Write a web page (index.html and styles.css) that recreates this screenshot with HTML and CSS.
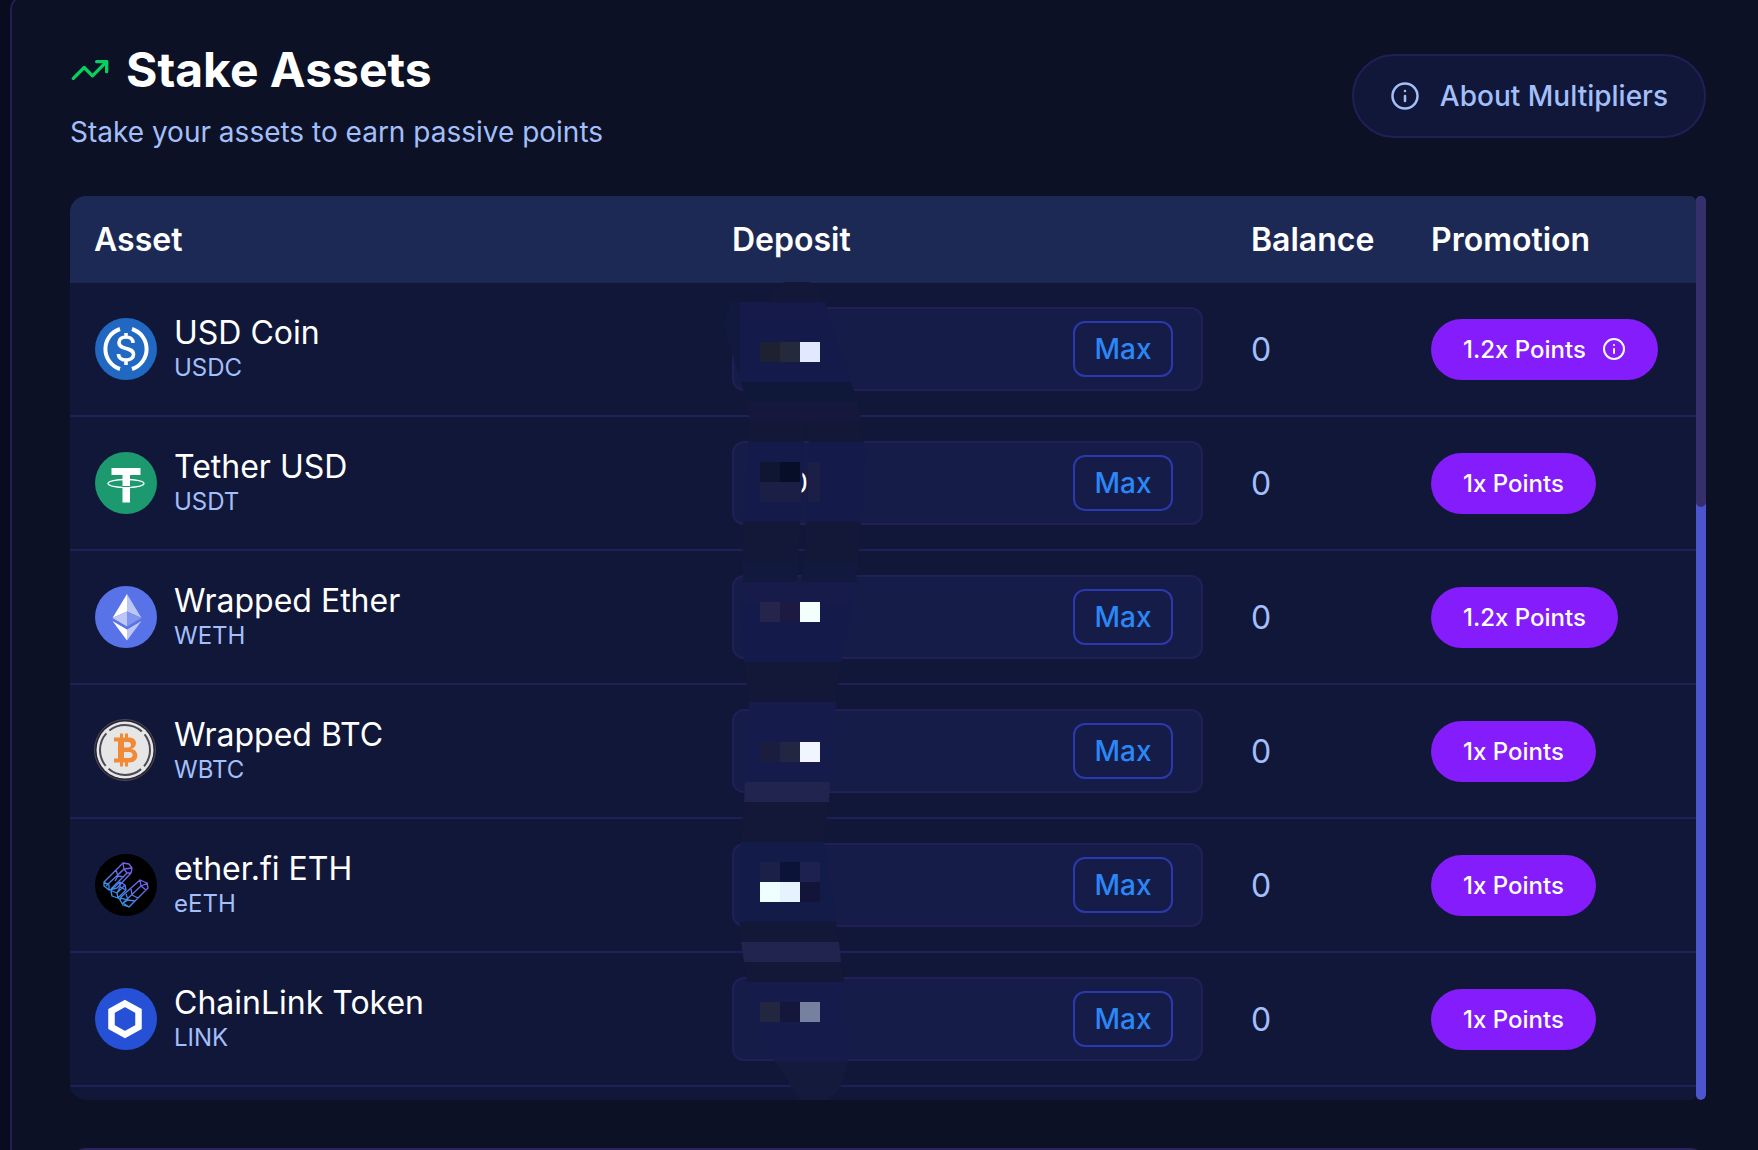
FILE: index.html
```html
<!DOCTYPE html>
<html lang="en">
<head>
    <meta charset="utf-8">
    <title>Stake Assets</title>
    <link rel="stylesheet" href="styles.css">
</head>
<body>
    <!-- shared icons -->
    <svg class="defs" width="0" height="0" aria-hidden="true">
        <symbol id="info" viewBox="0 0 24 24">
            <circle cx="12" cy="12" r="10"/>
            <path d="M12 16v-4M12 8h.01"/>
        </symbol>
    </svg>

    <main class="panel">
        <header class="panel-header">
            <div>
                <h1 class="title">
                    <svg class="trend" viewBox="0 0 24 24"><path d="M22 7l-8.500 8.500-5-5L2 17"/><path d="M16 7h6v6"/></svg>
                    Stake Assets
                </h1>
                <p class="subtitle">Stake your assets to earn passive points</p>
            </div>
            <button type="button" class="about-btn">
                <svg class="icon"><use href="#info"/></svg>
                About Multipliers
            </button>
        </header>

        <div class="table-wrap">
            <div class="table-view">
                <table>
                    <colgroup>
                        <col>
                        <col class="col-deposit">
                        <col class="col-balance">
                        <col class="col-promo">
                    </colgroup>
                    <thead>
                        <tr>
                            <th scope="col">Asset</th>
                            <th scope="col">Deposit</th>
                            <th scope="col">Balance</th>
                            <th scope="col">Promotion</th>
                        </tr>
                    </thead>
                    <tbody>
                        <tr>
                            <td>
                                <div class="asset">
                                    <svg class="coin" viewBox="0 0 64 64">
                                        <circle cx="32" cy="32" r="31" fill="#2168c2"/>
                                        <path d="M26 12a21 21 0 0 0 0 40M38 12a21 21 0 0 1 0 40" fill="none" stroke="#fff" stroke-width="4"/>
                                        <path d="M39 26c0-4-3-6-7-6s-7 2-7 5.500c0 8 14.500 4 14.500 12 0 3.500-3.500 5.500-7.500 5.500s-7.500-2-7.500-6M32 16v5M32 42v6" fill="none" stroke="#fff" stroke-width="3.600"/>
                                    </svg>
                                    <div class="asset-text">
                                        <div class="name">USD Coin</div>
                                        <div class="symbol">USDC</div>
                                    </div>
                                </div>
                            </td>
                            <td class="deposit-cell">
                                <div class="deposit">
                                    <input type="text" aria-label="USDC deposit">
                                    <button type="button" class="max-btn">Max</button>
                                </div>
                                <!-- pixelated cover over the deposit amounts -->
                                <svg class="mosaic" viewBox="708 275 170 830">
                                    <path fill="#131838" d="M768 304l6-14 10-8h26l8 8 5 12z"/>
                                    <path fill="#111a3e" d="M731 302h9v75l-7-20-10-35z"/>
                                    <path fill="#161a4a" d="M740 302h85l6 20h-91z"/>
                                    <path fill="#141b4a" d="M740 322h91l14 40 6 20H741z"/>
                                    <path fill="#101839" d="M741 382h110l7 20H747z"/>
                                    <path fill="#16173c" d="M747 402h111l3 20H750z"/>
                                    <path fill="#131838" d="M750 422h54v20h-56zM807 422h54l2 20h-54z"/>
                                    <path fill="#141b4a" d="M748 442h56l-4 80h-57zM809 442h55l1 20-4 60h-55z"/>
                                    <path fill="#131838" d="M743 522h57l-2 40h-55zM806 522h55l-3 40h-55z"/>
                                    <path fill="#111a3e" d="M743 562h55l-1 20h-54zM803 562h55l-2 20h-55z"/>
                                    <path fill="#161b4a" d="M742 582h113l-2 20H741z"/>
                                    <path fill="#141b4a" d="M741 602h112l-12 60H744z"/>
                                    <path fill="#131838" d="M744 662h97l-5 40h-87z"/>
                                    <path fill="#151b4b" d="M749 702h87l-6 80h-85z"/>
                                    <path fill="#20244e" d="M745 782h85l-1 20h-85z"/>
                                    <path fill="#131838" d="M744 802h85l-5 40h-83z"/>
                                    <path fill="#131b49" d="M741 842h83l12 80h-96z"/>
                                    <path fill="#131838" d="M740 922h96l3 20h-98z"/>
                                    <path fill="#20244e" d="M741 942h98l2 20h-97z"/>
                                    <path fill="#131838" d="M744 962h97l3 20h-97z"/>
                                    <path fill="#151b4a" d="M747 982h97l4 80h-73z"/>
                                    <path fill="#131a3b" d="M775 1062h73l-8 26-12 12h-28l-9-14z"/>
                                    <g shape-rendering="crispEdges">
                                        <path fill="#1d2132" d="M760 342h20v20h-20z"/>
                                        <path fill="#25293c" d="M780 342h20v20h-20z"/>
                                        <path fill="#e1e8ff" d="M800 342h20v20h-20z"/>
                                        <path fill="#0f1632" d="M760 462h20v20h-20z"/>
                                        <path fill="#070e28" d="M780 462h20v20h-20z"/>
                                        <path fill="#1b1f45" d="M760 482h41v20h-41zM808 462h12v40h-12z"/>
                                        <path fill="#25244a" d="M760 602h20v20h-20z"/>
                                        <path fill="#1c1a40" d="M780 602h20v20h-20z"/>
                                        <path fill="#f3fffe" d="M800 602h20v20h-20z"/>
                                        <path fill="#1b1d3f" d="M760 742h20v20h-20z"/>
                                        <path fill="#232642" d="M780 742h20v20h-20z"/>
                                        <path fill="#f1f5ff" d="M800 742h20v20h-20z"/>
                                        <path fill="#1a2047" d="M760 862h20v20h-20z"/>
                                        <path fill="#0b1338" d="M780 862h20v20h-20z"/>
                                        <path fill="#1c214f" d="M800 862h20v20h-20z"/>
                                        <path fill="#effeff" d="M760 882h20v20h-20z"/>
                                        <path fill="#e7f2ff" d="M780 882h20v20h-20z"/>
                                        <path fill="#12143a" d="M800 882h20v20h-20z"/>
                                        <path fill="#22263e" d="M760 1002h20v20h-20z"/>
                                        <path fill="#15173a" d="M780 1002h20v20h-20z"/>
                                        <path fill="#76809f" d="M800 1002h20v20h-20z"/>
                                    </g>
                                </svg>
                            </td>
                            <td class="balance">0</td>
                            <td><button type="button" class="points">1.2x Points <svg class="icon"><use href="#info"/></svg></button></td>
                        </tr>
                        <tr>
                            <td>
                                <div class="asset">
                                    <svg class="coin" viewBox="0 0 64 64">
                                        <circle cx="32" cy="32" r="31" fill="#1c996f"/>
                                        <path d="M17.500 17h29v7H36v27.500h-7.500V24h-11z" fill="#fff"/>
                                        <ellipse cx="32" cy="32.500" rx="18" ry="4" fill="none" stroke="#fff" stroke-width="1.300"/>
                                        <path d="M28 35.500h8.500" stroke="#1c996f" stroke-width="1"/>
                                    </svg>
                                    <div class="asset-text">
                                        <div class="name">Tether USD</div>
                                        <div class="symbol">USDT</div>
                                    </div>
                                </div>
                            </td>
                            <td>
                                <div class="deposit">
                                    <input type="text" value="0.0" aria-label="USDT deposit">
                                    <button type="button" class="max-btn">Max</button>
                                </div>
                            </td>
                            <td class="balance">0</td>
                            <td><button type="button" class="points">1x Points</button></td>
                        </tr>
                        <tr>
                            <td>
                                <div class="asset">
                                    <svg class="coin" viewBox="0 0 64 64">
                                        <circle cx="32" cy="32" r="31" fill="#5872e8"/>
                                        <path d="M33 9L18.500 33 33 26.500z" fill="#fff"/>
                                        <path d="M33 9l14.500 24L33 26.500z" fill="#bcc7f6"/>
                                        <path d="M18.500 33L33 26.500v15z" fill="#bcc7f6"/>
                                        <path d="M47.500 33L33 26.500v15z" fill="#7f94ee"/>
                                        <path d="M18.500 36L33 44.500v11z" fill="#fff"/>
                                        <path d="M47.500 36L33 44.500v11z" fill="#bcc7f6"/>
                                    </svg>
                                    <div class="asset-text">
                                        <div class="name">Wrapped Ether</div>
                                        <div class="symbol">WETH</div>
                                    </div>
                                </div>
                            </td>
                            <td>
                                <div class="deposit">
                                    <input type="text" aria-label="WETH deposit">
                                    <button type="button" class="max-btn">Max</button>
                                </div>
                            </td>
                            <td class="balance">0</td>
                            <td><button type="button" class="points">1.2x Points</button></td>
                        </tr>
                        <tr>
                            <td>
                                <div class="asset">
                                    <svg class="coin" viewBox="0 0 64 64">
                                        <circle cx="31" cy="31" r="30.500" fill="#262230" stroke="#6b6870" stroke-width=".6"/>
                                        <circle cx="31" cy="31" r="28.500" fill="#e6e6e6"/>
                                        <circle cx="31" cy="31" r="25" fill="none" stroke="#4d4a57" stroke-width="2" stroke-dasharray="35.270 4" stroke-dashoffset="-21.600"/>
                                        <path d="M20 18.500h15c9 0 9 10 2 11.500 9 1 8.500 13.500-1.500 13.500H20v-4h4v-17h-4zM30 23v5.500h4c4 0 4-5.500 0-5.500zM30 33v6h5c5 0 5-6 0-6z" fill="#f08a36" fill-rule="evenodd"/>
                                        <path d="M27.500 14.500v4.500M32.500 14.500v4.500M27.500 43v4.500M32.500 43v4.500" stroke="#f08a36" stroke-width="3"/>
                                    </svg>
                                    <div class="asset-text">
                                        <div class="name">Wrapped BTC</div>
                                        <div class="symbol">WBTC</div>
                                    </div>
                                </div>
                            </td>
                            <td>
                                <div class="deposit">
                                    <input type="text" aria-label="WBTC deposit">
                                    <button type="button" class="max-btn">Max</button>
                                </div>
                            </td>
                            <td class="balance">0</td>
                            <td><button type="button" class="points">1x Points</button></td>
                        </tr>
                        <tr>
                            <td>
                                <div class="asset">
                                    <svg class="coin" viewBox="0 0 64 64">
                                        <defs>
                                            <linearGradient id="etherfi" gradientUnits="userSpaceOnUse" x1="16" y1="46" x2="42" y2="18">
                                                <stop offset="0" stop-color="#2f9be8"/>
                                                <stop offset="1" stop-color="#7a5cf0"/>
                                            </linearGradient>
                                        </defs>
                                        <circle cx="32" cy="32" r="31" fill="#000"/>
                                        <g fill="none" stroke="url(#etherfi)" stroke-width="1.300" stroke-linejoin="round">
                                            <path d="M29 10l6 1 3 4-1 5-14 15-8 2-5-4v-4L29 10zM29 10l1 6 3 4 4 0M38 15l-8 1-5 5M30 16L12 33M33 20L17 36M10 29l5 3v5M22 17l2 6 6 1M24 23l-3 5"/>
                                            <path d="M18 36l8-7 5 3 1 5-8 8-6-2-1-5zM18 38l5 2 1 5M26 29v5l6 3M26 34l-3 6M31 32l-8 8"/>
                                            <path d="M46 27l7 3 1 5-19 19-6-2-3-5 1-3L46 27zM46 27l1 6 5 4M54 30l-7 3-18 17M32 41l2 6 7 1M34 47l-5 3 6 4M37 36l1 6 6 3M27 45l7 2M24 45l3 2"/>
                                        </g>
                                    </svg>
                                    <div class="asset-text">
                                        <div class="name">ether.fi ETH</div>
                                        <div class="symbol">eETH</div>
                                    </div>
                                </div>
                            </td>
                            <td>
                                <div class="deposit">
                                    <input type="text" aria-label="eETH deposit">
                                    <button type="button" class="max-btn">Max</button>
                                </div>
                            </td>
                            <td class="balance">0</td>
                            <td><button type="button" class="points">1x Points</button></td>
                        </tr>
                        <tr>
                            <td>
                                <div class="asset">
                                    <svg class="coin" viewBox="0 0 64 64">
                                        <circle cx="32" cy="32" r="31" fill="#2650d6"/>
                                        <path d="M31 16.500l13.500 7.500v16L31 47.500 17.500 40V24z" fill="none" stroke="#fff" stroke-width="6.500"/>
                                    </svg>
                                    <div class="asset-text">
                                        <div class="name">ChainLink Token</div>
                                        <div class="symbol">LINK</div>
                                    </div>
                                </div>
                            </td>
                            <td>
                                <div class="deposit">
                                    <input type="text" aria-label="LINK deposit">
                                    <button type="button" class="max-btn">Max</button>
                                </div>
                            </td>
                            <td class="balance">0</td>
                            <td><button type="button" class="points">1x Points</button></td>
                        </tr>
                    </tbody>
                </table>
            </div>
            <div class="scroll-track"><div class="scroll-thumb"></div></div>
        </div>

        <section class="next-card"></section>
    </main>
</body>
</html>
```
FILE: styles.css
```css
* {
    box-sizing: border-box;
}

body {
    margin: 0;
    height: 100vh;
    overflow: hidden;
    background-color: #070c1e;
    color: #fff;
    font-family: Inter, "Liberation Sans", sans-serif;
}

button, input {
    font-family: inherit;
}

.defs {
    position: absolute;
}

.icon, .trend, symbol {
    fill: none;
    stroke: currentColor;
    stroke-width: 2;
    stroke-linecap: round;
    stroke-linejoin: round;
}

/* Main panel, runs past the top and right of the window */
.panel {
    margin: -6px 0 0 10px;
    padding: 48px 52px 0 58px;
    height: calc(100vh + 6px);
    overflow: hidden;
    border: 2px solid #221f57;
    border-right: 0;
    border-bottom: 0;
    border-top-left-radius: 16px;
    background-color: #0c1126;
}

.panel-header {
    display: flex;
    justify-content: space-between;
    align-items: center;
    margin-bottom: 48px;
}

.title {
    display: flex;
    align-items: center;
    gap: 16px;
    margin: 0 0 20px;
    font-size: 48px;
    line-height: 52px;
    font-weight: 700;
}

.trend {
    width: 40px;
    height: 40px;
    color: #05d15f;
}

.subtitle {
    margin: 0;
    font-size: 28px;
    line-height: 32px;
    color: #a3bffa;
}

.about-btn {
    display: flex;
    align-items: center;
    gap: 20px;
    height: 84px;
    padding: 0 36px;
    border: 2px solid #221f57;
    border-radius: 42px;
    background-color: #111738;
    color: #a3bffa;
    font-size: 28px;
    font-weight: 500;
}

.about-btn .icon {
    width: 30px;
    height: 30px;
}

/* Table */
.table-wrap {
    display: flex;
    height: 904px;
    border-radius: 16px 5px 5px 16px;
    overflow: hidden;
}

.table-view {
    flex: 1;
    overflow: hidden;
    background-color: #111738;
    border-radius: 0 6px 6px 0;
}

table {
    width: 100%;
    table-layout: fixed;
    border-collapse: separate;
    border-spacing: 0;
}

.col-deposit {
    width: 519px;
}

.col-balance {
    width: 180px;
}

.col-promo {
    width: 289px;
}

th {
    height: 87px;
    padding: 0 24px;
    background-color: #1d2955;
    text-align: left;
    font-size: 32px;
    font-weight: 600;
}

td {
    height: 134px;
    padding: 0 24px;
    border-bottom: 2px solid #201f57;
}

.asset {
    display: flex;
    align-items: center;
    gap: 16px;
}

.coin {
    width: 64px;
    height: 64px;
}

.asset-text {
    padding-top: 2px;
}

.name {
    font-size: 32px;
    line-height: 36px;
}

.symbol {
    font-size: 24px;
    line-height: 34px;
    color: #a3bffa;
}

.deposit-cell {
    position: relative;
}

.deposit {
    display: flex;
    align-items: center;
    height: 84px;
    padding: 0 28px 0 32px;
    border: 2px solid #221f57;
    border-radius: 12px;
    background-color: #161c48;
}

.deposit input {
    flex: 1;
    min-width: 0;
    padding: 0;
    border: 0;
    outline: 0;
    background: transparent;
    color: #fff;
    font-size: 28px;
}

.max-btn {
    width: 100px;
    height: 56px;
    padding: 0;
    border: 2px solid #2c38ae;
    border-radius: 12px;
    background: transparent;
    color: #2b87f5;
    font-size: 28px;
    font-weight: 500;
}

.mosaic {
    position: absolute;
    top: -8px;
    left: 0;
    width: 170px;
    height: 830px;
    pointer-events: none;
}

.balance {
    color: #a3bffa;
    font-size: 32px;
}

.points {
    display: flex;
    align-items: center;
    gap: 16px;
    height: 61px;
    padding: 0 32px;
    border: 0;
    border-radius: 31px;
    background-color: #841cfb;
    color: #fff;
    font-size: 24px;
    font-weight: 500;
}

.points .icon {
    width: 24px;
    height: 24px;
}

/* Scrollbar */
.scroll-track {
    width: 10px;
    border-radius: 5px;
    background-color: #4c55cd;
}

.scroll-thumb {
    height: 311px;
    border-radius: 5px;
    background-color: #352f6c;
}

.next-card {
    height: 200px;
    margin-top: 48px;
    border: 2px solid #2a2463;
    border-radius: 16px;
    background-color: #111738;
}
```
